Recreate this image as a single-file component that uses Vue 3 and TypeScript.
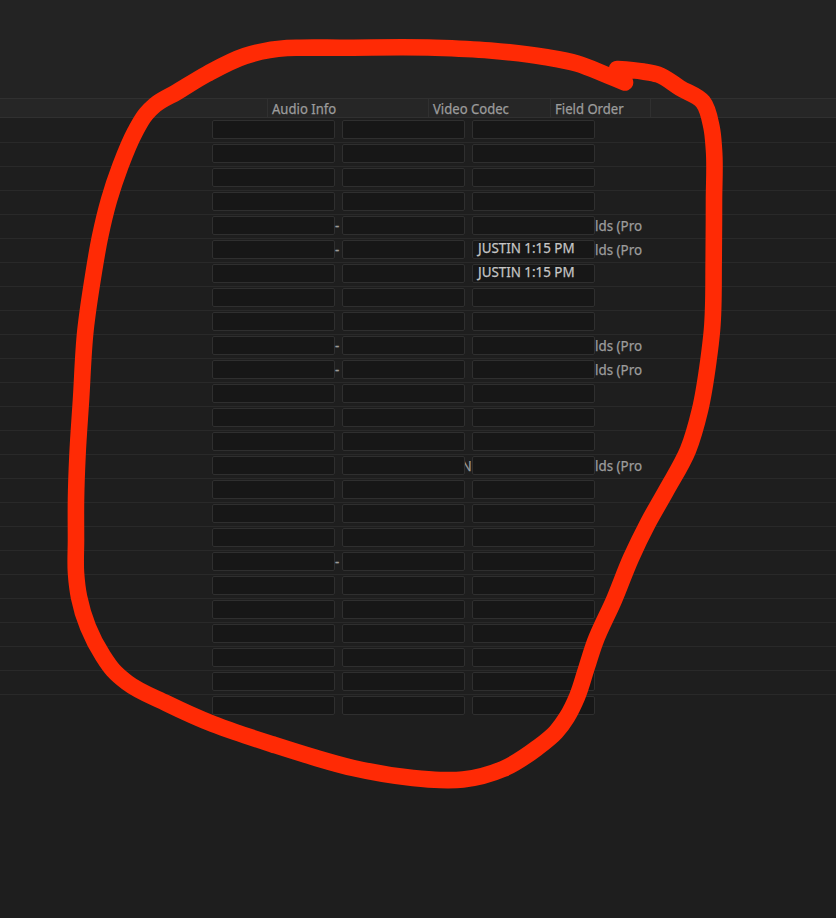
<template>
    <div class="page">
        <div class="toolbar"></div>
        <div class="header">
            <div class="th spacer"></div>
            <div class="th audio"><span class="text">Audio Info</span></div>
            <div class="th codec"><span class="text">Video Codec</span></div>
            <div class="th order"><span class="text">Field Order</span></div>
            <div class="th rest"></div>
        </div>
        <div class="list">
            <div v-for="(row, index) in rows" :key="index" class="row">
                <div class="field"></div>
                <div class="gap"><span class="text dash">{{ row.audio }}</span></div>
                <div class="field"></div>
                <div class="gap clip"><span class="text">{{ row.codec }}</span></div>
                <div class="field"><span class="text note">{{ row.note }}</span></div>
                <div class="tail"><span class="text">{{ row.order }}</span></div>
            </div>
        </div>
        <svg class="marker" viewBox="0 0 836 918">
            <path :d="markerPath" />
        </svg>
    </div>
</template>

<script lang="ts" setup>
interface Row {
    audio?: string;
    codec?: string;
    note?: string;
    order?: string;
}

const ROW_COUNT = 25;

const filled: Record<number, Row> = {
    4: { audio: "-", order: "lds (Pro" },
    5: { audio: "-", note: "JUSTIN 1:15 PM", order: "lds (Pro" },
    6: { note: "JUSTIN 1:15 PM" },
    9: { audio: "-", order: "lds (Pro" },
    10: { audio: "-", order: "lds (Pro" },
    14: { codec: "N", order: "lds (Pro" },
    18: { audio: "-" },
};

const rows: Row[] = Array.from({ length: ROW_COUNT }, (_, i) => filled[i] || {});

const points: number[][] = [
    [625, 82.5], [608, 75.5], [577, 63.5], [545, 57], [490, 50.5], [435, 47.7], [340, 47.7],
    [300, 47.7], [287, 48], [245, 56], [207, 74], [177, 92], [155, 105], [146, 114],
    [135, 132], [120, 167], [109, 200], [100, 237], [93, 277], [85.5, 330], [81, 400],
    [77.5, 455], [76, 500], [76, 540], [76, 573], [79, 597], [88, 627], [103, 656],
    [113, 670], [127, 682.5], [167, 703.5], [213, 724], [235, 732], [273, 744.5],
    [313, 757], [353, 768], [413, 778], [440, 780], [463, 779.5], [503, 769], [537, 748],
    [556, 732], [567, 717], [577, 697], [586.5, 668], [595, 642], [614, 600], [631, 558],
    [648, 523], [666, 491], [688, 450], [700, 410], [708.5, 360], [712, 330], [713.7, 260],
    [714, 200], [714, 150], [711.5, 127], [703, 102], [680, 88], [658, 74.5], [643, 71.5],
    [617, 69],
];

const getTangent = (list: number[][], i: number) => {
    const prev = list[Math.max(i - 1, 0)];
    const cur = list[i];
    const next = list[Math.min(i + 1, list.length - 1)];
    const l1 = Math.hypot(cur[0] - prev[0], cur[1] - prev[1]) || 1;
    const l2 = Math.hypot(next[0] - cur[0], next[1] - cur[1]) || 1;
    return [0, 1].map(
        (n) =>
            (((cur[n] - prev[n]) / l1) * l2 + ((next[n] - cur[n]) / l2) * l1) /
            (l1 + l2)
    );
};

// 折线 转 平滑曲线
const toSmoothPath = (list: number[][]) => {
    let d = `M${list[0].join(" ")}`;

    for (let i = 0; i < list.length - 1; i++) {
        const [x1, y1] = list[i];
        const [x2, y2] = list[i + 1];
        const k = Math.hypot(x2 - x1, y2 - y1) / 3;
        const t1 = getTangent(list, i);
        const t2 = getTangent(list, i + 1);
        d += `C${x1 + t1[0] * k} ${y1 + t1[1] * k} ${x2 - t2[0] * k} ${y2 - t2[1] * k} ${x2} ${y2}`;
    }

    return d;
};

const markerPath = toSmoothPath(points);
</script>

<style>
body {
    background: #1e1e1e;
}
</style>

<style scoped>
.page {
    position: relative;
    width: 836px;
    height: 918px;
    overflow: hidden;
    background: #1e1e1e;
    color: #9c9c9c;
    font-family: "Noto Sans", sans-serif;
    font-size: 14px;
    line-height: 20px;
}

.toolbar {
    height: 98px;
    background: #232323;
}

.header {
    display: flex;
    box-sizing: border-box;
    height: 20px;
    background: #262626;
    border-top: 1px solid #303030;
    border-bottom: 1px solid #303030;
}

.th {
    box-sizing: border-box;
    padding-left: 4px;
    border-left: 1px solid #303030;
}

.spacer {
    width: 267px;
    border-left: 0;
}

.audio {
    width: 161px;
}

.codec {
    width: 122px;
}

.order {
    width: 100px;
}

.rest {
    flex: 1;
}

.text {
    display: inline-block;
    white-space: nowrap;
    transform: scaleX(0.935);
    transform-origin: 0 50%;
    -webkit-text-stroke: 0.25px currentColor;
}

.row {
    display: grid;
    grid-template-columns: 123px 7px 123px 7px 123px 1fr;
    box-sizing: border-box;
    height: 24px;
    padding: 1px 0 0 212px;
    border-top: 1px solid #292929;
}

.row:first-child {
    border-top-color: transparent;
}

.field {
    box-sizing: border-box;
    height: 19px;
    padding-left: 5px;
    line-height: 14px;
    background: #171717;
    border: 1px solid #2f2f2f;
    border-radius: 2px;
}

.note {
    color: #c6c6c6;
    transform: scaleX(0.955);
}

.gap,
.tail {
    height: 20px;
}

.tail .text {
    transform: scaleX(0.955);
}

.dash {
    margin-left: -0.5px;
    -webkit-text-stroke-width: 0.35px;
}

.clip {
    display: flex;
    justify-content: flex-end;
    overflow: hidden;
}

.clip .text {
    transform-origin: 100% 50%;
}

.marker {
    position: absolute;
    top: 0;
    left: 0;
    width: 836px;
    height: 918px;
}

.marker path {
    fill: none;
    stroke: #ff2a05;
    stroke-width: 16.6;
    stroke-linecap: round;
    stroke-linejoin: round;
}
</style>
